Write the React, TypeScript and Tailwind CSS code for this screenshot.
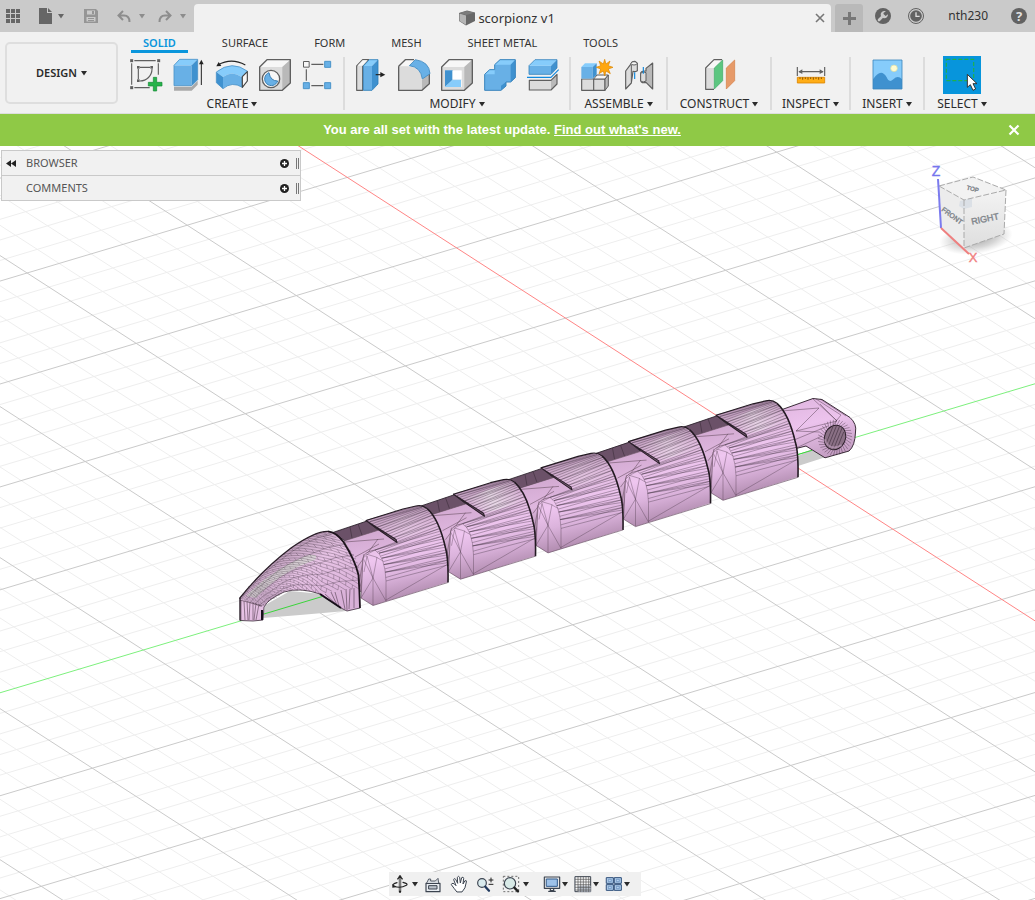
import React from "react";

type Pt = [number, number];

const Caret = ({ className = "" }: { className?: string }) => (
  <svg aria-hidden="true" viewBox="0 0 6 5" className={`h-[5px] w-[6px] shrink-0 ${className}`}>
    <path d="M0 0h6L3 4.600z" fill="currentColor" />
  </svg>
);

const Icon = ({ children }: { children: React.ReactNode }) => (
  <svg aria-hidden="true" viewBox="0 0 96 96" className="size-8 shrink-0 overflow-visible" strokeLinejoin="round">
    {children}
  </svg>
);

const EDGE = "#5f5f5f";
const GRAY = "#dcdcdc";
const SHADE = "#b9b9b9";
const PALE = "#f7f7f7";
const BLUE = "#68b0e6";
const DEEP = "#3f91cf";
const SKY = "#86ccfb";

const Handle = ({ x, y, s = 9, fill = EDGE, stroke = "none" }: { x: number; y: number; s?: number; fill?: string; stroke?: string }) => (
  <rect x={x - s / 2} y={y - s / 2} width={s} height={s} fill={fill} stroke={stroke} strokeWidth="3" />
);

const SketchIcon = () => (
  <Icon>
    <path d="M13 5h64M5 13v64M85 13v34M13 86h46M30 25h30M25 30v30M66 30c0 20-16 36-36 36" fill="none" stroke={EDGE} strokeWidth="3.4" />
    <Handle x={5} y={5} /><Handle x={86} y={5} /><Handle x={5} y={86} />
    <Handle x={25} y={25} s={8} /><Handle x={65} y={25} s={8} /><Handle x={25} y={65} s={8} />
    <path d="M70 55h10v15h16v11H80v15H70V81H55V70h15z" fill="#27b34b" stroke="#138a35" strokeWidth="2" />
  </Icon>
);
const ExtrudeIcon = () => (
  <Icon>
    <path d="M3 83h53v12H3zM56 83l18-18v12L56 95z" fill="#a9a9a9" />
    <path d="M3 19h53v61H3z" fill={BLUE} />
    <path d="M3 19L20 1h54L56 19z" fill={SKY} />
    <path d="M56 19L74 1v61L56 80z" fill={DEEP} />
    <path d="M3 19L20 1h54v61L56 80H3z" fill="none" stroke="#4a93c9" strokeWidth="2.5" />
    <path d="M85 78V12" stroke="#222" strokeWidth="3" />
    <path d="M85 2l7 14H78z" fill="#222" />
  </Icon>
);
const RevolveIcon = () => (
  <Icon>
    <path d="M1 39Q48 2 95 37L77 54Q48 33 21 54z" fill={SKY} />
    <path d="M1 39l20 15v35L1 71z" fill={DEEP} />
    <path d="M21 54Q48 33 77 54l2 31Q48 66 21 89z" fill={BLUE} />
    <path d="M1 39Q48 2 95 37L77 54l2 31Q48 66 21 89L1 71z" fill="none" stroke="#4a93c9" strokeWidth="2.5" />
    <path d="M79 53l15-15v28L79 85z" fill={PALE} stroke="#444" strokeWidth="3.5" />
    <path d="M6 18Q46-5 88 18" fill="none" stroke="#222" strokeWidth="3.5" />
    <path d="M1 22L8 9l8 12z" fill="#222" />
  </Icon>
);
const BoxShape = () => (
  <>
    <path d="M2 24L24 2h70v70L70 94H2z" fill={GRAY} />
    <path d="M2 24L24 2h70L70 24z" fill={PALE} />
    <path d="M70 24L94 2v70L70 94z" fill={SHADE} />
    <path d="M2 24L24 2h70v70L70 94H2z" fill="none" stroke={EDGE} strokeWidth="4" />
  </>
);
const HoleIcon = () => (
  <Icon>
    <BoxShape />
    <circle cx="36" cy="60" r="26" fill={PALE} stroke={EDGE} strokeWidth="4" />
    <path d="M30 41A20 20 0 1 0 56 66Q34 66 30 41z" fill={BLUE} stroke="#3b80b5" strokeWidth="3" />
  </Icon>
);
const PatternIcon = () => (
  <Icon>
    <path d="M28 16h36M13 31v34M28 80h36" stroke={EDGE} strokeWidth="3.5" />
    <Handle x={13} y={16} s={17} fill={PALE} stroke={EDGE} />
    <Handle x={77} y={16} s={18} fill={BLUE} stroke="#4a93c9" />
    <Handle x={13} y={80} s={18} fill={BLUE} stroke="#4a93c9" />
    <Handle x={77} y={80} s={18} fill={BLUE} stroke="#4a93c9" />
  </Icon>
);
const PressPullIcon = () => (
  <Icon>
    <path d="M5 21L23 2h18L23 21v73H5z" fill={GRAY} stroke={EDGE} strokeWidth="3.5" />
    <path d="M7 20L23 4h15L23 20z" fill={PALE} />
    <path d="M25 21h26v73H25z" fill={BLUE} />
    <path d="M25 21L43 2h26L51 21z" fill={SKY} />
    <path d="M51 21L69 2v73L51 94z" fill={DEEP} />
    <path d="M25 21L43 2h26v73L51 94H25z" fill="none" stroke="#2f7fb9" strokeWidth="2.5" />
    <path d="M62 47h20" stroke="#222" strokeWidth="3.5" />
    <path d="M76 39l15 8-15 8z" fill="#222" />
  </Icon>
);
const FilletIcon = () => (
  <Icon>
    <path d="M2 22L22 2h24L30 22z" fill={PALE} />
    <path d="M2 22h28q40 4 42 42v30H2z" fill={GRAY} />
    <path d="M72 62l22-22v34L72 94z" fill={SHADE} />
    <path d="M2 22L22 2h26M2 22v72h70l22-20V44" fill="none" stroke={EDGE} strokeWidth="4" />
    <path d="M34 20L52 2q42 6 44 42L73 60Q68 24 34 20z" fill={BLUE} stroke="#4189bf" strokeWidth="2.5" />
  </Icon>
);
const ShellIcon = () => (
  <Icon>
    <BoxShape />
    <path d="M12 34h50v50H12z" fill="#fff" />
    <path d="M12 34h23v28L12 84z" fill={DEEP} />
    <path d="M12 84l23-22h25v22z" fill={SKY} />
    <path d="M35 34v28h26" fill="none" stroke="#b8d6ec" strokeWidth="2" />
    <path d="M35 36h26v25H35z" fill="#fff" />
  </Icon>
);
const CombineIcon = () => (
  <Icon>
    <path d="M2 46l15-14h15V17L48 2h46v54L80 69H66v12L51 94H2z" fill={BLUE} />
    <path d="M32 17L48 2h46L80 17zM2 46l15-14h15v14z" fill={SKY} />
    <path d="M80 17L94 2v54L80 69zM51 80l15-11v12L51 94z" fill={DEEP} />
    <path d="M2 46l15-14h15V17L48 2h46v54L80 69H66v12L51 94H2z" fill="none" stroke="#3b85bd" strokeWidth="3" />
  </Icon>
);
const SplitIcon = () => (
  <Icon>
    <path d="M6 20h66v26H6z" fill={BLUE} />
    <path d="M6 20L24 2h66L72 20z" fill={SKY} />
    <path d="M72 20L90 2v25L72 46z" fill={DEEP} />
    <path d="M6 20L24 2h66v25L72 46H6z" fill="none" stroke="#3b85bd" strokeWidth="2.5" />
    <path d="M0 55h72l23-23" fill="none" stroke="#1289dd" strokeWidth="3.5" />
    <path d="M7 64h65v29H7z" fill={GRAY} />
    <path d="M72 64l18-18v29L72 93z" fill={SHADE} />
    <path d="M7 64h65l18-18v29L72 93H7z" fill="none" stroke={EDGE} strokeWidth="3.5" />
  </Icon>
);
const ComponentIcon = () => (
  <Icon>
    <path d="M2 60h36v34H2zM38 60h34v34H38z" fill={GRAY} stroke={EDGE} strokeWidth="3.5" />
    <path d="M38 60l10-12h34L72 60z" fill={PALE} stroke={EDGE} strokeWidth="3" />
    <path d="M72 60l10-12v33L72 94z" fill={SHADE} stroke={EDGE} strokeWidth="3" />
    <path d="M1 24h34v35H1z" fill={BLUE} />
    <path d="M1 24l11-11h35L35 24z" fill={SKY} />
    <path d="M35 24l12-11v34L35 59z" fill={DEEP} />
    <path d="M71 1l4 14 12-9-5 14 14 5-14 5 6 14-13-8-4 15-4-15-13 8 5-14-13-5 13-5-5-14 13 9z" fill="#ffa70f" stroke="#db8500" strokeWidth="2" />
  </Icon>
);
const JointIcon = () => (
  <Icon>
    <path d="M5 36L20 16q4-9 12-9l8 6v22q-7 5-13 2L22 72 5 90z" fill={GRAY} stroke={EDGE} strokeWidth="3.5" />
    <ellipse cx="30" cy="13" rx="9" ry="5" fill={PALE} stroke={EDGE} strokeWidth="3" />
    <path d="M22 18v50" stroke={EDGE} strokeWidth="3" />
    <path d="M66 28l20-16v78L66 70q-14 4-16-5V42q2-7 16-6z" fill={SHADE} stroke={EDGE} strokeWidth="3.5" />
    <path d="M50 43q8-8 16-2v25q-9 6-16 0z" fill={GRAY} stroke={EDGE} strokeWidth="3" />
    <path d="M32 40v20M58 24v20" stroke="#1289dd" strokeWidth="3.5" />
  </Icon>
);
const ConstructIcon = () => (
  <Icon>
    <path d="M8 27h25v64H8z" fill={GRAY} />
    <path d="M8 27L33 2h24L33 27z" fill={PALE} />
    <path d="M33 91H8V27L33 2h24" fill="none" stroke={EDGE} strokeWidth="3.5" />
    <path d="M34 27L59 3v62L34 90z" fill="#5cc680" stroke="#3ba863" strokeWidth="2" />
    <path d="M70 27L95 3v62L70 90z" fill="#e69a69" stroke="#d37d42" strokeWidth="2" />
  </Icon>
);
const MeasureIcon = () => (
  <Icon>
    <path d="M7 24v27M89 24v27M12 38h72" stroke="#606060" strokeWidth="3.5" />
    <path d="M10 38l12-7v14zM86 38l-12-7v14z" fill="#606060" />
    <path d="M7 55h82v17H7z" fill="#ffad16" stroke="#dc8500" strokeWidth="2.5" />
    <path d="M15 55v5M23 55v7M31 55v5M39 55v7M47 55v5M55 55v7M63 55v5M71 55v7M79 55v5" stroke="#8a5600" strokeWidth="3" />
  </Icon>
);
const ImageIcon = () => (
  <Icon>
    <path d="M6 3h87v87H6z" fill={SKY} />
    <circle cx="69" cy="28" r="10" fill="#fffbd0" stroke="#d5dba5" strokeWidth="2" />
    <path d="M6 61Q30 25 47 55q7 18 20 6 14-14 26 0v29H6z" fill={DEEP} />
    <path d="M6 3h87v87H6z" fill="none" stroke="#3d87bd" strokeWidth="2.5" />
  </Icon>
);
const SelectIcon = () => (
  <svg aria-hidden="true" viewBox="0 0 114 114" className="size-[38px] shrink-0">
    <path d="M0 0h114v114H0z" fill="#0795dc" />
    <path d="M10 10h82v64H10z" fill="none" stroke="#1fb14a" strokeWidth="3.5" strokeDasharray="12 6" />
    <path d="M73 55v39l9-8 8 17 8-4-8-16h12z" fill="#fff" stroke="#333" strokeWidth="3" />
  </svg>
);

const Group = ({ label, className = "", children }: { label: string; className?: string; children: React.ReactNode }) => (
  <section aria-label={label} className={`flex h-[53px] shrink-0 flex-col items-center justify-between border-[#dcdcdc] ${className}`}>
    <div className="flex h-9 items-center gap-[11px]">{children}</div>
    <button className="flex items-center gap-[3px] text-xs leading-3 whitespace-nowrap text-[#2b2b2b]">
      {label}
      <Caret />
    </button>
  </section>
);

const Tool = ({ name, children }: { name: string; children: React.ReactNode }) => (
  <button aria-label={name} className="flex shrink-0">{children}</button>
);

const TopBar = () => (
  <header className="flex h-8 shrink-0 bg-[#cacaca] text-[#666]">
    <div className="flex w-[194px] shrink-0 items-center pl-[6px]">
      <button aria-label="Data panel">
        <svg aria-hidden="true" viewBox="0 0 14 14" className="size-[14px]" fill="currentColor">
          {[0, 5, 10].map((y) => [0, 5, 10].map((x) => <rect key={`${x}-${y}`} x={x} y={y} width="4" height="4" />))}
        </svg>
      </button>
      <button aria-label="File" className="ml-[19px] flex items-center gap-[6px]">
        <svg aria-hidden="true" viewBox="0 0 13 16" className="h-4 w-[13px]" fill="currentColor">
          <path d="M0 0h8v5h5v11H0z" /><path d="M9 0l4 4H9z" />
        </svg>
        <Caret />
      </button>
      <button aria-label="Save" className="ml-5 text-[#959595]">
        <svg aria-hidden="true" viewBox="0 0 14 14" className="size-[14px]" fill="currentColor" fillRule="evenodd">
          <path d="M0 0h12l2 2v12H0zM3 1.500v4h8v-4zM2.500 8v4.500h9V8zM8 2h2v3H8zM4 9h6v1H4zM4 11h6v1H4z" />
        </svg>
      </button>
      <button aria-label="Undo" className="ml-[19px] flex items-center gap-2 text-[#8d8d8d]">
        <svg aria-hidden="true" viewBox="0 0 14 13" className="h-[13px] w-[14px]" fill="none" stroke="currentColor" strokeWidth="2">
          <path d="M6 1L1.500 5.500 6 10M2 5.500h5Q12.500 5.500 12.500 12" />
        </svg>
        <Caret />
      </button>
      <button aria-label="Redo" className="ml-[13px] flex items-center gap-2 text-[#8d8d8d]">
        <svg aria-hidden="true" viewBox="0 0 14 13" className="h-[13px] w-[14px]" fill="none" stroke="currentColor" strokeWidth="2">
          <path d="M8 1l4.500 4.500L8 10M12 5.500H7Q1.500 5.500 1.500 12" />
        </svg>
        <Caret />
      </button>
    </div>
    <div className="mt-1 flex min-w-0 flex-1 items-center rounded-t-[4px] bg-[#f1f1f1] pr-[6px]">
      <h1 className="flex flex-1 items-center justify-center gap-[3px] pl-[5px] text-[13px] leading-4 text-[#333]">
        <svg aria-hidden="true" viewBox="0 0 16 16" className="size-4">
          <path d="M0 3l8-2.500 8 2V11l-9 4.500L0 11z" fill="#686868" />
          <path d="M.5 3.500L7 5.500v9.300L.5 11z" fill="#b5b5b5" />
          <path d="M.5 3L8 1l7.500 1.800L7 5z" fill="#7c7c7c" />
        </svg>
        scorpionz v1
      </h1>
      <button aria-label="Close document">
        <svg aria-hidden="true" viewBox="0 0 10 10" className="size-[10px]" stroke="#777" strokeWidth="1.600"><path d="M1 1l8 8M9 1L1 9" /></svg>
      </button>
    </div>
    <div className="flex shrink-0 items-center pr-2">
      <button aria-label="New design" className="mt-1 ml-1 flex h-7 w-7 items-center justify-center rounded-t-[3px] bg-[#b9b9b9]">
        <svg aria-hidden="true" viewBox="0 0 13 13" className="size-[13px]" fill="#777"><path d="M5 0h3v5h5v3H8v5H5V8H0V5h5z" /></svg>
      </button>
      <button aria-label="Extensions" className="ml-3">
        <svg aria-hidden="true" viewBox="0 0 48 48" className="size-4">
          <circle cx="24" cy="24" r="24" fill="#626262" />
          <path d="M12 36l13-13" stroke="#cacaca" strokeWidth="8" strokeLinecap="round" />
          <path d="M33 10a11 11 0 1 0 6 9l-7 5-7-5 1-5z" fill="#cacaca" />
        </svg>
      </button>
      <button aria-label="Job status" className="ml-[17px]">
        <svg aria-hidden="true" viewBox="0 0 48 48" className="size-4">
          <circle cx="24" cy="24" r="22.500" fill="none" stroke="#626262" strokeWidth="3" />
          <circle cx="24" cy="24" r="17.500" fill="#626262" />
          <path d="M24 13v12h11" fill="none" stroke="#dedede" strokeWidth="4" />
        </svg>
      </button>
      <button className="ml-6 text-xs leading-4 text-[#333]">nth230</button>
      <button aria-label="Help" className="ml-[23px] flex size-4 items-center justify-center rounded-full bg-[#626262] font-sans text-[13px] leading-4 font-bold text-[#e0e0e0]">?</button>
    </div>
  </header>
);

const Ribbon = () => (
  <div className="flex shrink-0 border-b border-[#dedede] bg-[#f1f1f1] pt-[5px] pl-[5px]">
    <button className="mt-[5px] mr-2 flex h-[62px] w-[113px] shrink-0 items-center justify-center gap-1 rounded-[5px] border-2 border-[#dedede] text-[11px] font-semibold text-[#2b2b2b]">
      DESIGN
      <Caret />
    </button>
    <div className="min-w-0 flex-1">
      <nav className="flex h-4 gap-[22px] pl-[5px] text-[11px] leading-3 text-[#333]">
        {["SOLID", "SURFACE", "FORM", "MESH", "SHEET METAL", "TOOLS"].map((tab, i) => (
          <a key={tab} href={`#${tab.toLowerCase().replace(" ", "-")}`} className={`flex h-4 items-start px-3 whitespace-nowrap ${i === 0 ? "border-b-[3px] border-[#0a96dc] font-semibold text-[#0a96dc]" : ""}`}>
            {tab}
          </a>
        ))}
      </nav>
      <div className="mt-1 flex pb-[3px]">
        <Group label="CREATE" className="pr-[9px] pl-1">
          <Tool name="Create sketch"><SketchIcon /></Tool>
          <Tool name="Extrude"><ExtrudeIcon /></Tool>
          <Tool name="Revolve"><RevolveIcon /></Tool>
          <Tool name="Hole"><HoleIcon /></Tool>
          <Tool name="Rectangular pattern"><PatternIcon /></Tool>
        </Group>
        <Group label="MODIFY" className="border-l-2 px-[10px]">
          <Tool name="Press pull"><PressPullIcon /></Tool>
          <Tool name="Fillet"><FilletIcon /></Tool>
          <Tool name="Shell"><ShellIcon /></Tool>
          <Tool name="Combine"><CombineIcon /></Tool>
          <Tool name="Split body"><SplitIcon /></Tool>
        </Group>
        <Group label="ASSEMBLE" className="border-l-2 px-[10px]">
          <Tool name="New component"><ComponentIcon /></Tool>
          <Tool name="Joint"><JointIcon /></Tool>
        </Group>
        <Group label="CONSTRUCT" className="w-[104px] border-l-2"><Tool name="Offset plane"><ConstructIcon /></Tool></Group>
        <Group label="INSPECT" className="w-[79px] border-l-2"><Tool name="Measure"><MeasureIcon /></Tool></Group>
        <Group label="INSERT" className="w-[74px] border-l-2"><Tool name="Insert image"><ImageIcon /></Tool></Group>
        <Group label="SELECT" className="w-[76px] border-l-2"><Tool name="Select"><SelectIcon /></Tool></Group>
      </div>
    </div>
  </div>
);

const Banner = () => (
  <div className="flex h-8 shrink-0 items-center bg-[#8fc946] pr-[15px] font-['Liberation_Sans',sans-serif] text-[13px] font-bold text-white">
    <p className="flex-1 pr-1 text-center">
      You are all set with the latest update. <a href="#whats-new" className="underline">Find out what's new.</a>
    </p>
    <button aria-label="Dismiss">
      <svg aria-hidden="true" viewBox="0 0 12 12" className="size-3" stroke="#fff" strokeWidth="2.200"><path d="M1.500 1.500l9 9M10.500 1.500l-9 9" /></svg>
    </button>
  </div>
);

/* Ground plane: one major cell spans RED along the red axis and GREEN along the green one. */
const ORIGIN: Pt = [783.7, 458.8];
const RED: Pt = [109.1, 70.35];
const GREEN: Pt = [160.1, -47.8];

const ground = (a: number, b: number): Pt => [
  ORIGIN[0] + a * RED[0] + b * GREEN[0],
  ORIGIN[1] + a * RED[1] + b * GREEN[1],
];
const seg = (p: Pt, q: Pt) => `M${p[0].toFixed(1)} ${p[1].toFixed(1)}L${q[0].toFixed(1)} ${q[1].toFixed(1)}`;

const STEPS = Array.from({ length: 121 }, (_, i) => i - 60);
const gridPath = (major: boolean) =>
  STEPS.filter((n) => (n % 5 === 0) === major && n !== 0)
    .map((n) => seg(ground(n / 5, -12), ground(n / 5, 12)) + seg(ground(-12, n / 5), ground(12, n / 5)))
    .join("");

const along = (pts: Pt[], t: number): Pt => {
  const s = Math.min(Math.max(t, 0), 0.9999) * (pts.length - 1);
  const i = Math.floor(s);
  const f = s - i;
  return [pts[i][0] + (pts[i + 1][0] - pts[i][0]) * f, pts[i][1] + (pts[i + 1][1] - pts[i][1]) * f];
};

const SLOT: Pt[] = [[367, 520], [397, 542]];
const CORNER: Pt[] = [[375, 550], [380, 554], [383, 561], [385, 570], [386, 581]];
const RIM: Pt[] = [[418, 506], [426, 508], [432, 514], [438, 524], [443, 537], [447, 551], [448, 564], [448, 574]];

const bodyMesh = (() => {
  let d = "";
  for (let i = 0; i < 12; i++) {
    d += seg(along(SLOT, i / 12), along(RIM, (i / 12) * 0.45));
    if (i % 3 === 1) d += seg(along(SLOT, i / 12), along(RIM, ((i + 1) / 12) * 0.45));
  }
  for (let i = 0; i < 16; i++) {
    const t = i / 15;
    const bunch = Math.floor(i / 3) / 5;
    d += seg(along(CORNER, bunch), along(RIM, 0.45 + t * 0.42));
    if (i % 3 === 1) d += seg(along(CORNER, bunch + 0.12), along(RIM, 0.45 + t * 0.42));
  }
  return d;
})();

const Segment = ({ index }: { index: number }) => (
  <g transform={`translate(${index * 87.5} ${index * -26.3})`}>
    <path d="M333 532.500L367 521 379 531 345 541z" fill="#6b5168" stroke="#2d222c" strokeWidth=".9" />
    <path d="M350 527l2 11M358 524l4 11" stroke="#3d2d3b" strokeWidth=".6" />
    <path d="M344 541L379 530 397 542 397 560 368 596 358 590Q359 563 344 541z" fill="url(#neck)" stroke="#67505f" strokeWidth=".6" />
    <path d="M345 542l39-3M358 566l20-27M355 557l24-13M359 584l5-30M359 590l5-16" stroke="#57414f" strokeWidth=".5" fill="none" />
    <path d="M366 520.500L403 509 416 506Q422 504.500 427 508.500 439 519 445.500 548 448.500 558 448 582L373 605.500 361 598 363 558Q364 552 375 550L397 542z" fill="url(#body)" />
    <path d="M378 524L422 508.500 436 528 400 539z" fill="url(#glint)" opacity={[0.3, 1, 0.3, 0.7, 0.8][index]} />
    <path d={bodyMesh} fill="none" stroke="#3f2f3d" strokeWidth=".55" opacity=".66" />
    <path d="M373 605V578L363 558M373 578L386 601V581M361 598L373 578M364 572L367 556 373 578 377 557M363 558Q368 553 375 550 385 556 386 581M366 554l10 3 7 4M386 600L448 564" fill="none" stroke="#4d3a4a" strokeWidth=".6" opacity=".62" />
    <path d="M366 520.500L379 530 397 542.500 396 539.500z" fill="#7b6078" stroke="#2b1f2a" strokeWidth="1.100" />
    <path d="M366 520.500L403 509 416 506Q422 504.500 427 508.500" fill="none" stroke="#231a22" strokeWidth="1.200" />
    <path d="M427 508.500Q439 519 445.500 548 448.500 558 448 582.500" fill="none" stroke="#231a22" strokeWidth="1.600" />
    <path d="M448 582.500L373 605.500 361 598 363 558Q364 552 375 550" fill="none" stroke="#6b5267" strokeWidth=".7" />
  </g>
);

const HEAD_TOP: Pt[] = [[240, 598], [248, 587], [257, 578], [268, 567], [280, 557], [291, 548], [303, 540], [315, 534], [327, 531]];
const HEAD_LOW: Pt[] = [[262, 607], [269, 601], [277, 597], [284, 592], [293, 590], [306, 591], [320, 594], [338, 590], [359, 589]];
const headPoint = (u: number, v: number): Pt => {
  const a = along(HEAD_TOP, u);
  const b = along(HEAD_LOW, u);
  const k = Math.sin(Math.PI * v) * u;
  return [a[0] + (b[0] - a[0]) * v + 12 * k, a[1] + (b[1] - a[1]) * v - 3 * k];
};
const headMesh = (() => {
  let d = "";
  const U = 24;
  const V = 15;
  for (let i = 0; i < U; i++)
    for (let j = 0; j < V; j++) {
      const p = headPoint(i / U, j / V);
      d += seg(p, headPoint((i + 1) / U, (j + 1) / V));
      if ((i + j) % 2) d += seg(p, headPoint(i / U, (j + 1) / V));
      if (j % 3 === 1) d += seg(p, headPoint((i + 1) / U, j / V));
    }
  return d;
})();

const Model = () => (
  <g strokeLinejoin="round">
    <path d="M263 618L265 605 290 591 322 594 346 611 300 615z" fill="#cbcbcb" />
    <path d="M263 614.300L322 596.600" stroke="#3bd53b" strokeWidth="1" />
    <path d="M798 456L816 447 826 457 798 466z" fill="#cbcbcb" />
    <path d="M798 454.500L812 450.300" stroke="#3bd53b" strokeWidth="1" />

    <path d="M778 411L813 398.500 822 399.500 850 417.500Q857 424 855.500 432 855 446 849 451L825 457.800 806 446 790 450z" fill="url(#tail)" stroke="#3a2c38" strokeWidth="1" />
    <path d="M781 411L819 408 796 431 837 421 813 399M794 440L828 426M796 431L819 432M837 421L820 404M816 399l25 16M820 399l26 17M841 415l-8 10M796 448l26-12" fill="none" stroke="#4b3948" strokeWidth=".6" opacity=".75" />
    <g transform="rotate(22 835 437.500)">
      {Array.from({ length: 34 }, (_, i) => {
        const a = (i / 34) * Math.PI * 2;
        return <path key={i} d={seg([835 + Math.cos(a) * 10.5, 437.5 + Math.sin(a) * 12.5], [835 + Math.cos(a + 0.15) * 17, 437.5 + Math.sin(a + 0.15) * 18])} stroke="#3c2c39" strokeWidth=".5" opacity=".7" />;
      })}
      <ellipse cx="835" cy="437.500" rx="10.500" ry="12.500" fill="#8a7085" stroke="#2a1e28" strokeWidth="1" />
      <path d="M829 428v19M832 426v23M835 425v25M838 426v23M841 429v17" stroke="#4c3a49" strokeWidth=".7" />
      <path d="M826 443q9 10 18-1" fill="none" stroke="#c5a3c2" strokeWidth="2" opacity=".6" />
    </g>

    {[4, 3, 2, 1, 0].map((i) => <Segment key={i} index={i} />)}

    <path d="M239.500 598.500Q262 570 291 548 315 531 328 531.300 336 532 343.500 542 355 560 358.500 575 359.500 590 360 608L347 611 341 608 320 594Q300 587 284 592 268 599 264 607L263 620 253 621 240 620.500z" fill="url(#head)" />
    <path d="M246 596Q270 571 305 556 320 552 315 560 280 572 256 598z" fill="#d5dcd2" opacity=".65" />
    <path d={headMesh} fill="none" stroke="#3a2a38" strokeWidth=".5" opacity=".6" />
    <path d="M240 600L262 606M241 600v20M244 601l1 19M247 601l1 19M250 602l-1 18M253 602v18M256 603l-2 17M259 604l-3 16M325 594l12 11M335 592l4 14M341 590l4 19M346 589l1 21M350 589l-1 20M354 588v20M331 592l6 13" stroke="#32242f" strokeWidth=".6" opacity=".8" />
    <path d="M239.500 598.500Q262 570 291 548 315 531 328 531.300" fill="none" stroke="#2a1e28" strokeWidth="1.300" />
    <path d="M328 531.300Q336 532 343.500 542 355 560 358.500 575 359.500 590 360 608" fill="none" stroke="#1d141c" strokeWidth="1.800" />
    <path d="M360 608L347 611 341 608 320 594Q300 587 284 592 268 599 264 607L263 620 253 621 240 620.500" fill="none" stroke="#3a2a38" strokeWidth=".8" />
    <path d="M240 598v22.500" stroke="#1d141c" strokeWidth="1.300" />
    <path d="M320 594l21 14M262 610v10" stroke="#17101a" strokeWidth="2" />
  </g>
);

const Scene = () => (
  <svg role="img" aria-label="Segmented scorpion tail model on the ground plane" viewBox="0 146 1035 754" preserveAspectRatio="xMidYMid slice" className="absolute inset-0 size-full">
    <defs>
      <linearGradient id="body" gradientUnits="userSpaceOnUse" x1="397" y1="508" x2="418" y2="597">
        <stop offset="0" stopColor="#b492b1" /><stop offset=".25" stopColor="#dfbadd" /><stop offset=".5" stopColor="#efc6f0" /><stop offset=".72" stopColor="#dbb3dc" /><stop offset="1" stopColor="#ae89ac" />
      </linearGradient>
      <linearGradient id="neck" gradientUnits="userSpaceOnUse" x1="365" y1="532" x2="375" y2="590">
        <stop offset="0" stopColor="#d2a9d1" /><stop offset=".45" stopColor="#dfb7df" /><stop offset="1" stopColor="#a785a5" />
      </linearGradient>
      <linearGradient id="glint" gradientUnits="userSpaceOnUse" x1="385" y1="535" x2="430" y2="512">
        <stop offset="0" stopColor="#e9dce6" stopOpacity=".1" /><stop offset=".45" stopColor="#e9e0e8" stopOpacity=".75" /><stop offset="1" stopColor="#e9dce6" stopOpacity="0" />
      </linearGradient>
      <linearGradient id="tail" gradientUnits="userSpaceOnUse" x1="805" y1="400" x2="820" y2="458">
        <stop offset="0" stopColor="#e2b8e2" /><stop offset=".4" stopColor="#ecc3ed" /><stop offset="1" stopColor="#c49ec3" />
      </linearGradient>
      <linearGradient id="head" gradientUnits="userSpaceOnUse" x1="285" y1="545" x2="325" y2="610">
        <stop offset="0" stopColor="#b898b4" /><stop offset=".4" stopColor="#e8c4e6" /><stop offset="1" stopColor="#d9b0d8" />
      </linearGradient>
    </defs>
    <path d={gridPath(false)} stroke="#eeeeee" strokeWidth="1" />
    <path d={gridPath(true)} stroke="#cacaca" strokeWidth="1" />
    <path d={seg(ground(-12, 0), ground(12, 0))} stroke="#ff8585" strokeWidth="1" />
    <path d={seg(ground(0, -12), ground(0, 12))} stroke="#7df07d" strokeWidth="1" />
    <Model />
  </svg>
);

const Panel = ({ title, collapse }: { title: string; collapse?: boolean }) => (
  <div className="flex h-[25px] items-center border-b border-[#c9c9c9] bg-[#f1f1f1] pr-px pl-1 text-[11px] leading-4 text-[#555]">
    <button aria-label={`Collapse ${title.toLowerCase()}`} className={`flex w-5 ${collapse ? "" : "invisible"}`}>
      <svg aria-hidden="true" viewBox="0 0 10 7" className="h-[7px] w-[10px]" fill="#222"><path d="M0 3.500L5 0v7zM5 3.500L10 0v7z" /></svg>
    </button>
    <h2 className="flex-1">{title}</h2>
    <button aria-label={`Expand ${title.toLowerCase()}`} className="mr-[7px]">
      <svg aria-hidden="true" viewBox="0 0 9 9" className="size-[9px]"><circle cx="4.500" cy="4.500" r="4.500" fill="#222" /><path d="M4.500 2v5M2 4.500h5" stroke="#fff" strokeWidth="1.300" /></svg>
    </button>
    <span className="h-[11px] w-[3px] border-x border-[#777]" />
  </div>
);

const ViewCube = () => (
  <svg role="img" aria-label="View cube" viewBox="0 0 105 125" className="absolute top-1 right-0 h-[125px] w-[105px] font-['Liberation_Sans',sans-serif]">
    <defs>
      <radialGradient id="shade"><stop offset="0" stopColor="#888" stopOpacity=".8" /><stop offset=".6" stopColor="#999" stopOpacity=".4" /><stop offset="1" stopColor="#aaa" stopOpacity="0" /></radialGradient>
      <linearGradient id="face" x1="0" y1="0" x2="0" y2="1"><stop offset="0" stopColor="#f3f3f3" /><stop offset="1" stopColor="#dedede" /></linearGradient>
    </defs>
    <ellipse cx="46" cy="88" rx="37" ry="16" fill="url(#shade)" transform="rotate(-8 46 88)" />
    <path d="M9 36L43 27 76 40 34 50z" fill="#f2f2f2" />
    <path d="M9 36L34 50V98L11 78z" fill="#ececec" />
    <path d="M34 50L76 40 74 84 34 98z" fill="url(#face)" />
    <path d="M30 51l4-1 8-2v9l-8 2-5-3z" fill="#dbe0e6" />
    <path d="M9 36L43 27 76 40 34 50zM34 50V98M76 40L74 84 34 98" fill="none" stroke="#aaa" strokeWidth="1" strokeDasharray="6 2" />
    <path d="M8 29l3 49" stroke="#7b7bee" strokeWidth="2" />
    <path d="M11 78l28 26" stroke="#ee7f7f" strokeWidth="2" />
    <g fill="#82878d" stroke="#82878d" strokeWidth=".4" textAnchor="middle">
      <text x="55" y="72" fontSize="9" transform="rotate(-12 55 69)">RIGHT</text>
      <text x="22" y="68" fontSize="7" transform="rotate(36 22 66)">FRONT</text>
      <text x="43" y="41" fontSize="6" transform="rotate(14 43 38)">TOP</text>
    </g>
    <text x="6" y="26" textAnchor="middle" fontSize="14" fill="#7575ee" stroke="#7575ee" strokeWidth=".4">Z</text>
    <text x="43" y="112" textAnchor="middle" fontSize="13" fill="#f08080" stroke="#f08080" strokeWidth=".4">X</text>
  </svg>
);

const NavButton = ({ name, caret, className = "", children }: { name: string; caret?: boolean; className?: string; children: React.ReactNode }) => (
  <button aria-label={name} className={`flex items-center text-[#2b2b2b] ${className}`}>
    <svg aria-hidden="true" viewBox="0 0 54 54" className="size-[18px]" fill="none" stroke="#3c4450" strokeWidth="3.500" strokeLinejoin="round" strokeLinecap="round">{children}</svg>
    {caret && <Caret />}
  </button>
);

const NavBar = () => (
  <div className="absolute inset-x-0 bottom-1 flex justify-center pr-[5px]">
    <div className="flex h-6 w-[252px] items-center bg-[#f0f0f0] pl-[2px]">
      <NavButton name="Orbit" caret className="mr-[6px] gap-[3px]">
        <path d="M27 4v46" stroke="#222" strokeWidth="7" /><path d="M27 6v40" stroke="#fff" strokeWidth="2.500" />
        <path d="M18 23Q2 27 8 32 26 42 46 31 53 26 36 22" stroke="#222" /><path d="M4 27v11l11-1z" fill="#222" stroke="none" /><path d="M20 12l7-8 7 8" stroke="#222" />
      </NavButton>
      <NavButton name="Look at" className="mr-2">
        <path d="M6 25h42v25H6z" fill="#e9edf2" /><path d="M8 24l6-12h6v6h14l8-8 2 14" fill="#d5dae0" strokeWidth="2.500" /><path d="M15 32h24v10H15z" fill="#b9c0c9" strokeWidth="3" />
      </NavButton>
      <NavButton name="Pan" className="mr-2">
        <path d="M20 50Q12 40 4 29q0-6 8-3l6 6-7-18q1-6 6-1l6 12-1-18q3-6 7 0l2 17 4-16q5-4 6 2l-2 17 6-10q6-1 4 4-2 20-12 29z" fill="#fff" strokeWidth="3" />
      </NavButton>
      <NavButton name="Zoom" className="mr-2">
        <circle cx="18" cy="24" r="13" fill="#d9ebee" /><path d="M28 35l11 12" stroke="#20395d" strokeWidth="7" /><path d="M39 15h12M45 9v12M39 28h12" stroke="#222" strokeWidth="3" />
      </NavButton>
      <NavButton name="Fit" caret className="mr-[14px] gap-[3px]">
        <path d="M4 4h46v46H4z" strokeDasharray="6 6" strokeWidth="2.500" stroke="#555" strokeLinecap="butt" /><circle cx="24" cy="25" r="17" fill="#d8eae7" /><path d="M37 38l11 11" stroke="#222" strokeWidth="7" />
      </NavButton>
      <NavButton name="Display settings" caret className="mr-[6px] gap-px">
        <path d="M4 6h46v34H4z" fill="#e8e8e8" /><path d="M11 12h32v22H11z" fill="#9ec2e9" stroke="#315a8c" strokeWidth="3" /><path d="M22 41v6h10v-6M17 49h20" />
      </NavButton>
      <NavButton name="Grid and snaps" caret className="mr-[6px] gap-px">
        <path d="M4 5h46v45H4z" fill="#f5f5f5" strokeWidth="3" /><path d="M11 32h39v18H11z" fill="#b7bec8" stroke="none" /><path d="M12 5v45M20 5v45M28 5v45M36 5v45M44 5v45M4 13h46M4 21h46M4 29h46M4 37h46M4 45h46" strokeWidth="2" stroke="#555" />
      </NavButton>
      <NavButton name="Viewports" caret className="gap-px">
        <path d="M5 8h20v17H5zM29 8h20v17H29zM5 29h20v17H5zM29 29h20v17H29z" fill="#b4d0ee" stroke="#2b4c78" strokeWidth="3" /><path d="M11 13h8v7h-8zM35 13h8v7h-8zM11 34h8v7h-8zM35 34h8v7h-8z" strokeWidth="2" stroke="#5b84b4" />
      </NavButton>
    </div>
  </div>
);

export default function App() {
  return (
    <div className="flex h-screen flex-col overflow-hidden bg-white font-['Noto_Sans',sans-serif]">
      <TopBar />
      <Ribbon />
      <Banner />
      <main className="relative min-h-0 flex-1 overflow-hidden">
        <Scene />
        <aside className="absolute top-1 left-px w-[300px] border-x border-t border-[#c9c9c9]">
          <Panel title="BROWSER" collapse />
          <Panel title="COMMENTS" />
        </aside>
        <ViewCube />
        <NavBar />
      </main>
    </div>
  );
}
